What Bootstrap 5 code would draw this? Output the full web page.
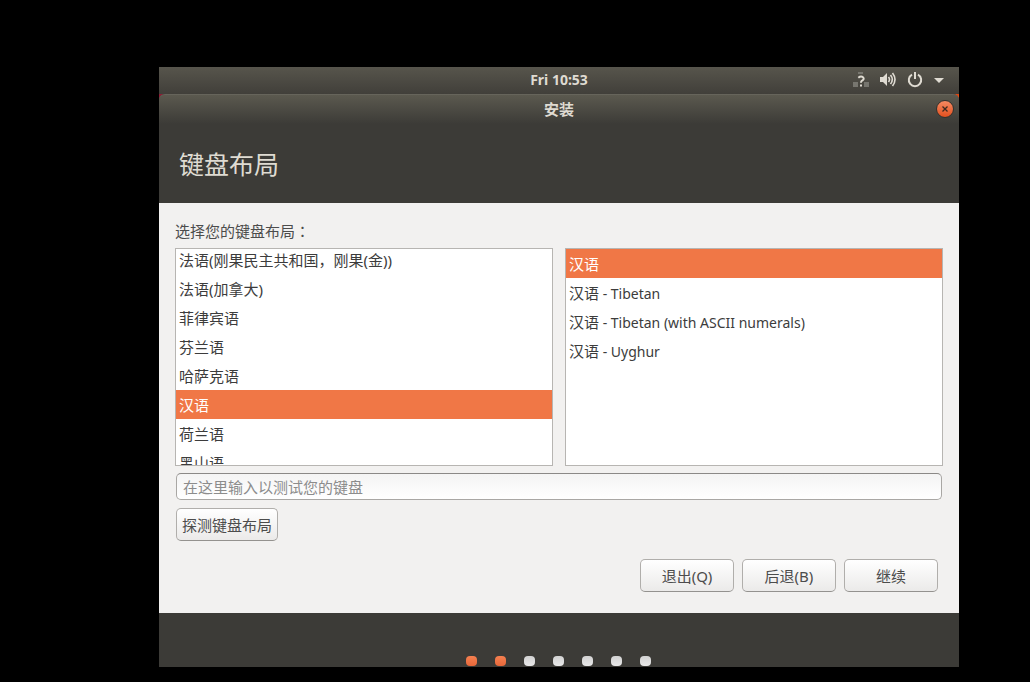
<!DOCTYPE html>
<html lang="zh-CN">
<head>
<meta charset="utf-8">
<meta name="viewport" content="width=device-width, initial-scale=1">
<title>安装</title>
<link href="https://cdn.jsdelivr.net/npm/bootstrap@5.3.0/dist/css/bootstrap.min.css" rel="stylesheet">
<style>
  :root { --ui: "Noto Sans", "Noto Sans CJK SC", sans-serif; --dark: #3c3b37; --orange: #f07746; }
  body { background: #000; font-family: var(--ui); font-size: 15px; line-height: 21px; color: #4c4c4c; }
  .desktop { margin: 67px 71px 15px 159px; background: linear-gradient(90deg, #8c1d35, #dd4814); }
  .panel { height: 27px; background: linear-gradient(#57554c, #413f3a); color: #dfdbd2; }
  .clock { font-weight: 700; font-size: 14px; line-height: 20px; padding-bottom: 2px; }
  .latin { font-size: 14px; }
  .tray { gap: 11px; padding-right: 15px; padding-bottom: 1px; }
  .installer { background: var(--dark); border-radius: 6px 6px 0 0; }
  .titlebar { height: 30px; background: linear-gradient(#5b594f, var(--dark)); border-top: 1px solid #66645b; border-radius: 6px 6px 0 0; color: #dfdbd2; font-weight: 700; }
  .close-btn { width: 18px; height: 18px; right: 5px; top: 5px; border-radius: 50%; border: 1px solid #33322e; background: linear-gradient(#f58a62, #e2501f); }
  .page-title { height: 79px; padding: 0 20px; font-size: 25px; line-height: 36px; color: #dfdbd2; }
  .form-area { background: #f2f1f0; padding: 18px 16px 21px; }
  .pick-label { line-height: 21px; height: 21px; margin-bottom: 6px; }
  .lists { gap: 12px; }
  .pick-list { height: 218px; overflow: hidden; background: #fff; border: 1px solid #b7b5b2; border-radius: 0; flex: 1 1 0; }
  .pick-list .list-group-item { flex: none; height: 29px; padding: 5px 3px 3px; border: 0; border-radius: 0; color: #3c3c3c; line-height: 21px; background: #fff; }
  .pick-list .list-group-item.active { background: var(--orange); color: #fff; margin: 0; }
  .test-input { height: 27px; margin: 7px 1px 8px; width: auto; padding: 0 6px; border: 1px solid #a9a7a4; border-top-color: #8b8987; border-radius: 5px; font-size: 15px; background: linear-gradient(#f4f4f4, #fff); }
  .test-input::placeholder { color: #8c8c8c; }
  .push { height: 33px; padding: 2px 5px 0; border: 1px solid #b0aeab; border-bottom-color: #94928f; border-radius: 5px; background: linear-gradient(#fff, #ebeae9); font-size: 15px; line-height: 21px; color: #4c4c4c; }
  .detect { margin-left: 1px; }
  .nav-push { width: 94px; }
  .actions { gap: 8px; margin-top: 18px; padding-right: 5px; }
  .steps { height: 54px; gap: 18px; padding: 0 2px 1px 0; }
  .step { width: 11px; height: 10px; border-radius: 4px; background: linear-gradient(#d2d2d2, #e8e8e8); }
  .step.done { background: linear-gradient(#f58050, #e8683a); }
</style>
</head>
<body>
<div class="desktop">
  <header class="panel position-relative d-flex align-items-center justify-content-center">
    <span class="clock">Fri 10:53</span>
    <div class="tray position-absolute top-0 end-0 h-100 d-flex align-items-center">
      <svg width="16" height="16" viewBox="0 0 16 16" aria-label="网络"><g fill="#77766f"><path d="M5 0h5v2H5zM0 10h5v5H0zM11 10h5v5h-5z"/></g><path d="M5.3 5.7Q8 3.5 10 5.2T8.4 9.2Q8 9.5 8 10.8M8 12.4v2" fill="none" stroke="#dfdbd2" stroke-width="2"/></svg>
      <svg width="16" height="16" viewBox="0 0 16 16" aria-label="音量"><path d="M0 5h3l4-4v13l-4-4H0z" fill="#dfdbd2"/><path d="M8.5 5q2 2.5 0 5M10.5 3q3.6 4.5 0 9M12.5 1q5 6.5 0 13" fill="none" stroke="#dfdbd2" stroke-width="1.6"/></svg>
      <svg width="16" height="16" viewBox="0 0 16 16" aria-label="电源"><path d="M5 2.6a6.2 6.2 0 1 0 6 0M8 0v7" fill="none" stroke="#dfdbd2" stroke-width="2"/></svg>
      <svg width="10" height="5" viewBox="0 0 10 5" aria-label="菜单"><path d="M0 0h10L5 5z" fill="#dfdbd2"/></svg>
    </div>
  </header>
  <main class="installer">
    <div class="titlebar position-relative d-flex align-items-center justify-content-center">
      <span>安装</span>
      <button class="close-btn position-absolute p-0 d-flex align-items-center justify-content-center" type="button" aria-label="关闭">
        <svg width="8" height="8" viewBox="0 0 8 8"><path d="M1.5 1.5l5 5M6.5 1.5l-5 5" stroke="#3c2a20" stroke-width="1.3"/></svg>
      </button>
    </div>
    <h1 class="page-title d-flex align-items-center m-0 fw-normal">键盘布局</h1>
    <form class="form-area">
      <div class="pick-label" id="pick">选择您的键盘布局<span lang="zh-TW">：</span></div>
      <div class="lists d-flex">
        <div class="pick-list list-group" id="layouts" role="listbox" aria-labelledby="pick">
          <button type="button" class="list-group-item list-group-item-action">法语(刚果民主共和国，刚果(金))</button>
          <button type="button" class="list-group-item list-group-item-action">法语(加拿大)</button>
          <button type="button" class="list-group-item list-group-item-action">菲律宾语</button>
          <button type="button" class="list-group-item list-group-item-action">芬兰语</button>
          <button type="button" class="list-group-item list-group-item-action">哈萨克语</button>
          <button type="button" class="list-group-item list-group-item-action active">汉语</button>
          <button type="button" class="list-group-item list-group-item-action">荷兰语</button>
          <button type="button" class="list-group-item list-group-item-action">黑山语</button>
        </div>
        <div class="pick-list list-group" role="listbox" aria-labelledby="pick">
          <button type="button" class="list-group-item list-group-item-action active">汉语</button>
          <button type="button" class="list-group-item list-group-item-action">汉语<span class="latin"> - Tibetan</span></button>
          <button type="button" class="list-group-item list-group-item-action">汉语<span class="latin"> - Tibetan (with ASCII numerals)</span></button>
          <button type="button" class="list-group-item list-group-item-action">汉语<span class="latin"> - Uyghur</span></button>
        </div>
      </div>
      <div class="d-flex flex-column">
        <input class="test-input form-control" type="text" placeholder="在这里输入以测试您的键盘" aria-label="在这里输入以测试您的键盘">
      </div>
      <button class="push detect btn" type="button">探测键盘布局</button>
      <div class="actions d-flex justify-content-end">
        <button class="push nav-push btn" type="button">退出(Q)</button>
        <button class="push nav-push btn" type="button">后退(B)</button>
        <button class="push nav-push btn" type="button">继续</button>
      </div>
    </form>
    <footer class="steps d-flex align-items-end justify-content-center">
      <span class="step done"></span><span class="step done"></span><span class="step"></span><span class="step"></span><span class="step"></span><span class="step"></span><span class="step"></span>
    </footer>
  </main>
</div>
<script src="https://cdn.jsdelivr.net/npm/bootstrap@5.3.0/dist/js/bootstrap.bundle.min.js"></script>
<script>
  document.getElementById('layouts').scrollTop = 4;
</script>
</body>
</html>
